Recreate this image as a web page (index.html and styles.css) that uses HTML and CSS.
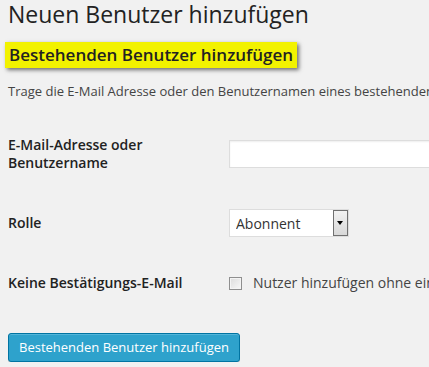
FILE: index.html
```html
<!DOCTYPE html>
<html lang="de">
<head>
    <meta charset="UTF-8">
    <title>Neuen Benutzer hinzufügen</title>
    <link rel="stylesheet" href="styles.css">
</head>
<body>
    <div class="wrap">
        <h2 class="page-title">Neuen Benutzer hinzufügen</h2>

        <h3 class="section-title"><span class="highlight">Bestehenden Benutzer hinzufügen</span></h3>
        <p class="intro">Trage die E-Mail Adresse oder den Benutzernamen eines bestehenden Benutzers ein, um ihn zu dieser Website hinzuzufügen.</p>

        <form class="form-table">
            <div class="form-row">
                <label class="row-label" for="adduser-email">E-Mail-Adresse oder Benutzername</label>
                <div class="row-field">
                    <input type="text" id="adduser-email" class="text-input">
                </div>
            </div>

            <div class="form-row">
                <label class="row-label" for="adduser-role">Rolle</label>
                <div class="row-field">
                    <span class="select-wrap">
                        <select id="adduser-role" class="role-select">
                            <option selected>Abonnent</option>
                            <option>Mitarbeiter</option>
                            <option>Autor</option>
                            <option>Redakteur</option>
                            <option>Administrator</option>
                        </select>
                        <span class="select-arrow"></span>
                    </span>
                </div>
            </div>

            <div class="form-row">
                <span class="row-label">Keine Bestätigungs-E-Mail</span>
                <div class="row-field">
                    <label class="check-label">
                        <input type="checkbox" class="check-box">
                        Nutzer hinzufügen ohne eine Bestätigungs-E-Mail zu senden.
                    </label>
                </div>
            </div>

            <div class="submit-row">
                <button type="button" class="button-primary">Bestehenden Benutzer hinzufügen</button>
            </div>
        </form>
    </div>
</body>
</html>
```

FILE: styles.css
```css
body {
    margin: 0;
    background-color: #f1f1f1;
    color: #444;
    font-family: "Open Sans", sans-serif;
    font-size: 13px;
    overflow: hidden;
}

.wrap {
    padding: 0 0 0 8px;
    white-space: nowrap;
}

.page-title {
    margin: 0;
    padding: 0;
    font-size: 23px;
    font-weight: 400;
    line-height: 29px;
    color: #222;
}

/* markierte Ueberschrift */
.section-title {
    margin: 13px 0 0 -3px;
    font-size: 17px;
    font-weight: 600;
    line-height: 26px;
    color: #222;
}

.highlight {
    display: inline-block;
    background-color: #f2f200;
    padding: 0 4px 0 4px;
    box-shadow: 2px 2px 4px rgba(0, 0, 0, 0.55);
}

.intro {
    margin: 14px 0 0 0;
    line-height: 18px;
}

.form-table {
    margin-top: 15px;
}

.form-row {
    display: grid;
    grid-template-columns: 221px 1fr;
    align-items: center;
}

.row-label {
    font-size: 14px;
    font-weight: 600;
    line-height: 18px;
    color: #222;
    white-space: normal;
    width: 190px;
    padding: 21px 0;
}

.row-field {
    padding: 15px 0;
}

.text-input {
    display: block;
    box-sizing: border-box;
    width: 260px;
    height: 28px;
    margin: 0;
    border: 1px solid #ddd;
    background-color: #fff;
    box-shadow: inset 0 1px 2px rgba(0, 0, 0, 0.07);
}

.select-wrap {
    position: relative;
    display: block;
    width: 120px;
}

.role-select {
    appearance: none;
    -webkit-appearance: none;
    display: block;
    box-sizing: border-box;
    width: 120px;
    height: 28px;
    margin: 0;
    padding: 0 20px 0 6px;
    border: 1px solid #ddd;
    border-radius: 0;
    background-color: #fff;
    font-family: "Open Sans", sans-serif;
    font-size: 14px;
    color: #333;
}

.select-arrow {
    position: absolute;
    right: 1px;
    top: 1px;
    width: 15px;
    height: 26px;
    box-sizing: border-box;
    border: 1px solid #707070;
    background: linear-gradient(#f2f2f2, #d8d8d8);
    pointer-events: none;
}

.select-arrow::after {
    content: "";
    position: absolute;
    left: 3px;
    top: 10px;
    border-left: 3.5px solid transparent;
    border-right: 3.5px solid transparent;
    border-top: 4px solid #000;
}

.check-label {
    display: flex;
    align-items: center;
    gap: 11px;
    font-size: 14px;
    line-height: 18px;
    color: #444;
}

.check-box {
    appearance: none;
    -webkit-appearance: none;
    width: 13px;
    height: 13px;
    margin: 0;
    border: 1px solid #8f8f8f;
    background: linear-gradient(135deg, #dcdcdc, #f8f8f8);
    box-shadow: inset 0 0 0 1px #f4f4f4;
}

.submit-row {
    padding: 20px 0 0 0;
}

.button-primary {
    display: block;
    height: 29px;
    padding: 0 10px 1px;
    border: 1px solid #0074a2;
    border-radius: 3px;
    background-color: #2ea2cc;
    box-shadow: inset 0 1px 0 rgba(120, 200, 230, 0.5), 0 1px 0 rgba(0, 0, 0, 0.15);
    color: #fff;
    font-family: "Open Sans", sans-serif;
    font-size: 13px;
    line-height: 26px;
    cursor: pointer;
}
```
